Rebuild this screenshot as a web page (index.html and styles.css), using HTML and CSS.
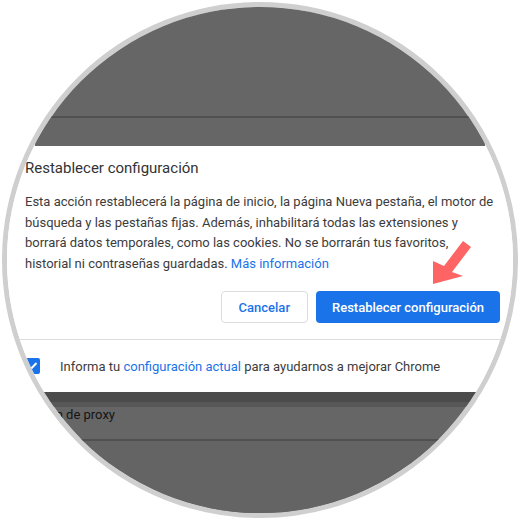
FILE: index.html
```html
<!DOCTYPE html>
<html lang="es">
<head>
<meta charset="utf-8">
<title>Restablecer configuración</title>
<link rel="stylesheet" href="styles.css">
</head>
<body>
<div class="lens">
  <div class="backdrop-top">
    <div class="shade shade-top">
      <div class="shade-line"></div>
      <div class="shade-fill"></div>
    </div>
  </div>

  <section class="dialog">
    <div class="dialog-body">
      <h1 class="title">Restablecer configuración</h1>
      <p class="text">Esta acción restablecerá la página de inicio, la página Nueva pestaña, el motor de<br>búsqueda y las pestañas fijas. Además, inhabilitará todas las extensiones y<br>borrará datos temporales, como las cookies. No se borrarán tus favoritos,<br>historial ni contraseñas guardadas. <a class="link" href="#">Más información</a></p>
      <div class="actions">
        <button class="btn btn-cancel">Cancelar</button>
        <button class="btn btn-primary">Restablecer configuración</button>
      </div>
    </div>
    <div class="divider"></div>
    <label class="report">
      <span class="check"><svg viewBox="0 0 16 16" width="16" height="16"><path d="M3.5 8.2l3 3 6-6.2" fill="none" stroke="#fff" stroke-width="2"/></svg></span>
      <span>Informa tu <a class="link" href="#">configuración actual</a> para ayudarnos a mejorar Chrome</span>
    </label>
  </section>

  <div class="backdrop-bottom">
    <div class="shadow-dark"></div>
    <div class="shadow-mid"></div>
    <div class="proxy-row">
      <div class="proxy-clip"><span class="proxy-text">Abrir configuración de proxy</span></div>
    </div>
    <div class="shade-line"></div>
    <div class="shade-rest"></div>
  </div>

  <svg class="arrow" viewBox="0 0 50 55" width="50" height="55">
    <polygon points="8,49 8,26 19,31 38,6 46,12 27,37 38,41" fill="#fe6464"/>
  </svg>
</div>
</body>
</html>
```

FILE: styles.css
```css
* { box-sizing: border-box; }

html, body {
  margin: 0;
  padding: 0;
  background: #ffffff;
}

body {
  font-family: Roboto, "Liberation Sans", Arial, sans-serif;
  width: 520px;
  height: 520px;
  overflow: hidden;
}

.lens {
  position: relative;
  width: 516px;
  height: 516px;
  margin: 2px auto 0;
  border: 5px solid #cfcfcf;
  border-radius: 50%;
  overflow: hidden;
  background: #ffffff;
  display: flex;
  flex-direction: column;
}

.backdrop-top {
  height: 139px;
  flex: none;
  display: flex;
  justify-content: center;
}

.shade-top {
  width: 450px;
  height: 100%;
  background: #666666;
  display: flex;
  flex-direction: column;
  justify-content: flex-end;
}

.shade-line {
  height: 2px;
  background: #505050;
  flex: none;
}

.shade-fill {
  height: 28px;
  background: #666666;
}

.dialog {
  height: 246px;
  flex: none;
  background: #ffffff;
  display: flex;
  flex-direction: column;
}

.dialog-body {
  padding: 12px 13px 0 18px;
}

.title {
  margin: 0;
  font-size: 15px;
  line-height: 20px;
  font-weight: 400;
  color: #333333;
}

.text {
  margin: 14px 0 0;
  font-size: 13px;
  line-height: 20.6px;
  color: #3c3c3c;
  white-space: nowrap;
}

.link {
  color: #1a73e8;
  text-decoration: none;
}

.actions {
  margin-top: 17px;
  display: flex;
  justify-content: flex-end;
  gap: 8px;
}

.btn {
  height: 32px;
  border-radius: 4px;
  font-family: inherit;
  font-size: 13px;
  font-weight: 500;
  white-space: nowrap;
  cursor: pointer;
}

.btn-cancel {
  padding: 0 17px;
  background: #ffffff;
  color: #1a73e8;
  border: 1px solid #dadce0;
}

.btn-primary {
  padding: 0 16px;
  background: #1a73e8;
  color: #ffffff;
  border: none;
}

.divider {
  margin-top: 16px;
  height: 1px;
  background: #dadce0;
}

.report {
  flex: 1;
  display: flex;
  align-items: center;
  gap: 20px;
  padding-left: 17px;
  font-size: 13px;
  color: #3c3c3c;
}

.check {
  width: 16px;
  height: 16px;
  border-radius: 2px;
  background: #1a73e8;
  display: flex;
  flex: none;
}

.backdrop-bottom {
  flex: 1;
  display: flex;
  flex-direction: column;
  background: #666666;
}

.shadow-dark {
  height: 10px;
  background: #4b4b4b;
}

.shadow-mid {
  height: 5px;
  background: #575757;
}

.proxy-row {
  height: 32px;
  display: flex;
  align-items: flex-start;
}

.proxy-clip {
  width: 108px;
  display: flex;
  justify-content: flex-end;
  flex: none;
}

.proxy-text {
  white-space: nowrap;
  font-size: 13px;
  line-height: 16px;
  color: #141414;
}

.shade-rest {
  flex: 1;
  background: #646464;
}

.arrow {
  position: absolute;
  left: 418px;
  top: 228px;
}
```
